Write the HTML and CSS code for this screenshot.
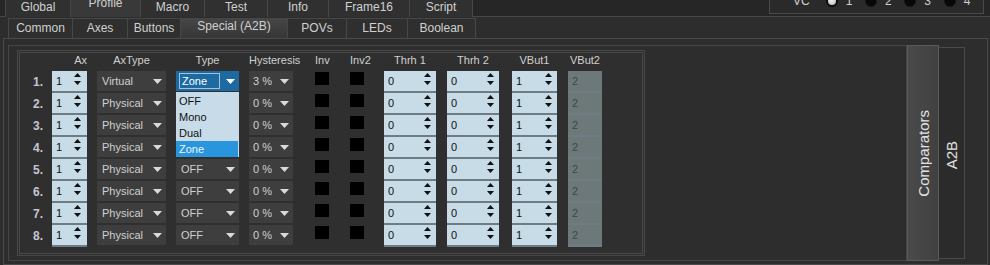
FILE: index.html
```html
<!DOCTYPE html>
<html lang="en">
<head>
    <meta charset="UTF-8">
    <title>Profile - Special (A2B)</title>
    <link rel="stylesheet" href="styles.css">
</head>
<body>
<svg class="defs" width="0" height="0">
    <symbol id="spin-arrows" viewBox="0 0 7 12"><path d="M0 4L3.5 0L7 4Z M0 8H7L3.5 12Z"/></symbol>
    <symbol id="drop-arrow" viewBox="0 0 9 5"><path d="M0 0H9L4.5 5Z"/></symbol>
</svg>

<div class="topbar">
    <div class="toptabs">
        <div class="toptab">Global</div>
        <div class="toptab active">Profile</div>
        <div class="toptab">Macro</div>
        <div class="toptab">Test</div>
        <div class="toptab">Info</div>
        <div class="toptab">Frame16</div>
        <div class="toptab">Script</div>
    </div>
    <div class="vc">
        <div class="vc-row">
            <span class="vc-label">VC</span>
            <span class="vc-opt"><i class="radio on"></i>1</span>
            <span class="vc-opt"><i class="radio"></i>2</span>
            <span class="vc-opt"><i class="radio"></i>3</span>
            <span class="vc-opt"><i class="radio"></i>4</span>
        </div>
    </div>
</div>

<div class="subbar">
    <div class="subtab">Common</div>
    <div class="subtab">Axes</div>
    <div class="subtab">Buttons</div>
    <div class="subtab active">Special (A2B)</div>
    <div class="subtab">POVs</div>
    <div class="subtab">LEDs</div>
    <div class="subtab">Boolean</div>
</div>

<div class="frame">
    <div class="group">
        <div class="panel">
            <div class="grid">
                <!-- заголовки -->
                <div></div>
                <div class="hdr c-ax right">Ax</div>
                <div class="hdr c-axtype">AxType</div>
                <div class="hdr c-type">Type</div>
                <div class="hdr c-hyst">Hysteresis</div>
                <div class="hdr c-inv">Inv</div>
                <div class="hdr c-inv">Inv2</div>
                <div class="hdr c-thr">Thrh 1</div>
                <div class="hdr c-thr">Thrh 2</div>
                <div class="hdr c-vbut">VBut1</div>
                <div class="hdr c-vbut2">VBut2</div>

                <!-- 1 -->
                <div class="num">1.</div>
                <div class="spin c-ax"><span>1</span><svg><use href="#spin-arrows"/></svg></div>
                <div class="combo c-axtype"><span>Virtual</span><svg><use href="#drop-arrow"/></svg></div>
                <div class="combo c-type open">
                    <span class="edit">Zone</span><svg><use href="#drop-arrow"/></svg>
                    <ul class="dropdown">
                        <li>OFF</li>
                        <li>Mono</li>
                        <li>Dual</li>
                        <li class="selected">Zone</li>
                    </ul>
                </div>
                <div class="combo c-hyst"><span>3 %</span><svg><use href="#drop-arrow"/></svg></div>
                <div class="check"></div>
                <div class="check"></div>
                <div class="spin c-thr"><span>0</span><svg><use href="#spin-arrows"/></svg></div>
                <div class="spin c-thr"><span>0</span><svg><use href="#spin-arrows"/></svg></div>
                <div class="spin c-vbut"><span>1</span><svg><use href="#spin-arrows"/></svg></div>
                <div class="spin c-vbut2 disabled"><span>2</span></div>

                <!-- 2 -->
                <div class="num">2.</div>
                <div class="spin c-ax"><span>1</span><svg><use href="#spin-arrows"/></svg></div>
                <div class="combo c-axtype"><span>Physical</span><svg><use href="#drop-arrow"/></svg></div>
                <div class="combo c-type"><span>OFF</span><svg><use href="#drop-arrow"/></svg></div>
                <div class="combo c-hyst"><span>0 %</span><svg><use href="#drop-arrow"/></svg></div>
                <div class="check"></div>
                <div class="check"></div>
                <div class="spin c-thr"><span>0</span><svg><use href="#spin-arrows"/></svg></div>
                <div class="spin c-thr"><span>0</span><svg><use href="#spin-arrows"/></svg></div>
                <div class="spin c-vbut"><span>1</span><svg><use href="#spin-arrows"/></svg></div>
                <div class="spin c-vbut2 disabled"><span>2</span></div>

                <!-- 3 -->
                <div class="num">3.</div>
                <div class="spin c-ax"><span>1</span><svg><use href="#spin-arrows"/></svg></div>
                <div class="combo c-axtype"><span>Physical</span><svg><use href="#drop-arrow"/></svg></div>
                <div class="combo c-type"><span>OFF</span><svg><use href="#drop-arrow"/></svg></div>
                <div class="combo c-hyst"><span>0 %</span><svg><use href="#drop-arrow"/></svg></div>
                <div class="check"></div>
                <div class="check"></div>
                <div class="spin c-thr"><span>0</span><svg><use href="#spin-arrows"/></svg></div>
                <div class="spin c-thr"><span>0</span><svg><use href="#spin-arrows"/></svg></div>
                <div class="spin c-vbut"><span>1</span><svg><use href="#spin-arrows"/></svg></div>
                <div class="spin c-vbut2 disabled"><span>2</span></div>

                <!-- 4 -->
                <div class="num">4.</div>
                <div class="spin c-ax"><span>1</span><svg><use href="#spin-arrows"/></svg></div>
                <div class="combo c-axtype"><span>Physical</span><svg><use href="#drop-arrow"/></svg></div>
                <div class="combo c-type"><span>OFF</span><svg><use href="#drop-arrow"/></svg></div>
                <div class="combo c-hyst"><span>0 %</span><svg><use href="#drop-arrow"/></svg></div>
                <div class="check"></div>
                <div class="check"></div>
                <div class="spin c-thr"><span>0</span><svg><use href="#spin-arrows"/></svg></div>
                <div class="spin c-thr"><span>0</span><svg><use href="#spin-arrows"/></svg></div>
                <div class="spin c-vbut"><span>1</span><svg><use href="#spin-arrows"/></svg></div>
                <div class="spin c-vbut2 disabled"><span>2</span></div>

                <!-- 5 -->
                <div class="num">5.</div>
                <div class="spin c-ax"><span>1</span><svg><use href="#spin-arrows"/></svg></div>
                <div class="combo c-axtype"><span>Physical</span><svg><use href="#drop-arrow"/></svg></div>
                <div class="combo c-type"><span>OFF</span><svg><use href="#drop-arrow"/></svg></div>
                <div class="combo c-hyst"><span>0 %</span><svg><use href="#drop-arrow"/></svg></div>
                <div class="check"></div>
                <div class="check"></div>
                <div class="spin c-thr"><span>0</span><svg><use href="#spin-arrows"/></svg></div>
                <div class="spin c-thr"><span>0</span><svg><use href="#spin-arrows"/></svg></div>
                <div class="spin c-vbut"><span>1</span><svg><use href="#spin-arrows"/></svg></div>
                <div class="spin c-vbut2 disabled"><span>2</span></div>

                <!-- 6 -->
                <div class="num">6.</div>
                <div class="spin c-ax"><span>1</span><svg><use href="#spin-arrows"/></svg></div>
                <div class="combo c-axtype"><span>Physical</span><svg><use href="#drop-arrow"/></svg></div>
                <div class="combo c-type"><span>OFF</span><svg><use href="#drop-arrow"/></svg></div>
                <div class="combo c-hyst"><span>0 %</span><svg><use href="#drop-arrow"/></svg></div>
                <div class="check"></div>
                <div class="check"></div>
                <div class="spin c-thr"><span>0</span><svg><use href="#spin-arrows"/></svg></div>
                <div class="spin c-thr"><span>0</span><svg><use href="#spin-arrows"/></svg></div>
                <div class="spin c-vbut"><span>1</span><svg><use href="#spin-arrows"/></svg></div>
                <div class="spin c-vbut2 disabled"><span>2</span></div>

                <!-- 7 -->
                <div class="num">7.</div>
                <div class="spin c-ax"><span>1</span><svg><use href="#spin-arrows"/></svg></div>
                <div class="combo c-axtype"><span>Physical</span><svg><use href="#drop-arrow"/></svg></div>
                <div class="combo c-type"><span>OFF</span><svg><use href="#drop-arrow"/></svg></div>
                <div class="combo c-hyst"><span>0 %</span><svg><use href="#drop-arrow"/></svg></div>
                <div class="check"></div>
                <div class="check"></div>
                <div class="spin c-thr"><span>0</span><svg><use href="#spin-arrows"/></svg></div>
                <div class="spin c-thr"><span>0</span><svg><use href="#spin-arrows"/></svg></div>
                <div class="spin c-vbut"><span>1</span><svg><use href="#spin-arrows"/></svg></div>
                <div class="spin c-vbut2 disabled"><span>2</span></div>

                <!-- 8 -->
                <div class="num">8.</div>
                <div class="spin c-ax"><span>1</span><svg><use href="#spin-arrows"/></svg></div>
                <div class="combo c-axtype"><span>Physical</span><svg><use href="#drop-arrow"/></svg></div>
                <div class="combo c-type"><span>OFF</span><svg><use href="#drop-arrow"/></svg></div>
                <div class="combo c-hyst"><span>0 %</span><svg><use href="#drop-arrow"/></svg></div>
                <div class="check"></div>
                <div class="check"></div>
                <div class="spin c-thr"><span>0</span><svg><use href="#spin-arrows"/></svg></div>
                <div class="spin c-thr"><span>0</span><svg><use href="#spin-arrows"/></svg></div>
                <div class="spin c-vbut"><span>1</span><svg><use href="#spin-arrows"/></svg></div>
                <div class="spin c-vbut2 disabled"><span>2</span></div>
            </div>
        </div>
    </div>
    <div class="vtab"><span class="vtext">Comparators</span></div>
    <div class="vpane"><span class="vtext">A2B</span></div>
</div>
</body>
</html>
```

FILE: styles.css
```css
* {
    box-sizing: border-box;
}
body {
    margin: 0;
    width: 990px;
    height: 265px;
    overflow: hidden;
    background: #2d2d2d;
    color: #d0d0d0;
    font-family: "Liberation Sans", Arial, sans-serif;
    font-size: 11px;
}
.defs {
    position: absolute;
    width: 0;
    height: 0;
}

/* верхние вкладки */
.topbar {
    display: flex;
    height: 17px;
    padding-left: 5px;
    background: #262626;
    border-bottom: 1px solid #474747;
}
.toptabs {
    display: grid;
    grid-template-columns: 66px 70px 64px 63px 61px 81px 63px;
}
.toptab {
    font-size: 12px;
    line-height: 14px;
    text-align: center;
    background: #303030;
    border-right: 1px solid #474747;
}
.toptab:first-child {
    border-left: 1px solid #474747;
}
.toptab.active {
    background: #393939;
    line-height: 7px;
    height: 17px;
}
.vc {
    margin-left: auto;
    margin-right: 6px;
    width: 215px;
    height: 14px;
    background: #2a2a2a;
    border: 1px solid #4a4a4a;
    border-top: none;
    overflow: hidden;
}
.vc-row {
    display: flex;
    align-items: center;
    height: 22px;
    margin-top: -10px;
    padding-left: 23px;
    font-size: 12px;
}
.vc-label {
    width: 34px;
}
.vc-opt {
    display: flex;
    align-items: center;
    gap: 8px;
    width: 41px;
}
.radio {
    width: 12px;
    height: 12px;
    border-radius: 50%;
    background: #080808;
    border: 1px solid #151515;
}
.radio.on {
    background: radial-gradient(circle at 45% 40%, #f2f2f2, #b8b8b8);
    border: 2px solid #0c0c0c;
}

/* вторые вкладки */
.subbar {
    display: grid;
    grid-template-columns: 64px 55px 53px 107px 59px 61px 69px;
    height: 21px;
    padding-left: 8px;
    align-items: end;
}
.subtab {
    height: 20px;
    font-size: 12px;
    line-height: 19px;
    text-align: center;
    background: #2f2f2f;
    border-top: 1px solid #474747;
    border-left: 1px solid #474747;
}
.subtab:last-child {
    border-right: 1px solid #474747;
}
.subtab.active {
    background: linear-gradient(#464646, #363636);
    line-height: 14px;
}

/* основная область */
.frame {
    display: flex;
    align-items: flex-start;
    height: 227px;
    margin: 0 2px 0 3px;
    padding: 6px 0 0 4px;
    border: 1px solid #4a4a4a;
}
.group {
    width: 899px;
    height: 216px;
    padding: 4px 0 0 8px;
    border: 1px solid #464646;
}
.panel {
    width: 628px;
    height: 206px;
    border: 3px double #484848;
    background: #2f2f2f;
}
.grid {
    display: grid;
    grid-template-columns: 32px 45px 79px 73px 66px 35px 34px 63px 65px 56px 34px;
    grid-template-rows: 18px;
    grid-auto-rows: 22px;
}
.hdr {
    line-height: 14px;
    text-align: center;
    color: #cfcfcf;
}
.hdr.right {
    text-align: right;
}
.num {
    padding-right: 9px;
    text-align: right;
    font-size: 12px;
    font-weight: bold;
    line-height: 22px;
    color: #c6c6d2;
}

.c-ax { width: 35px; }
.c-axtype { width: 69px; }
.c-type { width: 63px; }
.c-hyst { width: 44px; }
.c-inv { width: 14px; }
.c-thr { width: 52px; }
.c-vbut { width: 45px; }
.c-vbut2 { width: 34px; }

.spin {
    display: flex;
    justify-content: space-between;
    height: 22px;
    padding: 0 5px 0 4px;
    line-height: 20px;
    background: #c7dce7;
    border-bottom: 2px solid #6e7c85;
    color: #101010;
}
.spin.c-ax {
    padding-right: 6px;
}
.spin svg {
    width: 7px;
    height: 12px;
    margin-top: 2px;
    fill: #111;
}
.spin.disabled {
    background: #6d7878;
    color: #3a4a4e;
}

.combo {
    position: relative;
    display: flex;
    justify-content: space-between;
    align-items: center;
    height: 22px;
    padding: 0 4px 0 5px;
    background: #3e3e3e;
    border-bottom: 2px solid #2f2f2f;
    color: #d0d0d0;
}
.combo.c-hyst {
    padding-left: 4px;
}
.combo svg {
    width: 9px;
    height: 5px;
    fill: #dadada;
}
.combo.open {
    padding-left: 3px;
    align-items: flex-start;
    background: #1d6aa2;
}
.combo.open .edit {
    width: 41px;
    height: 16px;
    margin-top: 2px;
    padding-left: 2px;
    line-height: 14px;
    border: 1px solid #a9c1d1;
    color: #fff;
}
.combo.open svg {
    margin-top: 8px;
    fill: #fff;
}
.dropdown {
    position: absolute;
    top: 21px;
    left: 0;
    width: 63px;
    height: 65px;
    margin: 0;
    padding: 1px 0 0;
    list-style: none;
    background: #c7dce8;
    z-index: 2;
}
.dropdown li {
    height: 16px;
    padding-left: 3px;
    line-height: 16px;
    color: #111;
}
.dropdown li.selected {
    width: 62px;
    background: #2995dd;
    color: #eef6fc;
}

.check {
    width: 14px;
    height: 13px;
    margin-top: 1px;
    background: #000;
}

/* боковые вкладки */
.vtab {
    display: flex;
    align-items: center;
    justify-content: center;
    width: 32px;
    height: 216px;
    background: linear-gradient(90deg, #4a4a4a, #404040);
    border: 1px solid #5a5a5a;
}
.vpane {
    display: flex;
    align-items: center;
    justify-content: center;
    width: 26px;
    height: 212px;
    margin-top: 2px;
    padding-top: 4px;
    background: #2b2b2b;
    border: 1px solid #4a4a4a;
    border-left: none;
}
.vtext {
    writing-mode: vertical-rl;
    transform: rotate(180deg);
    font-size: 15px;
    color: #e2e2e2;
}
```
